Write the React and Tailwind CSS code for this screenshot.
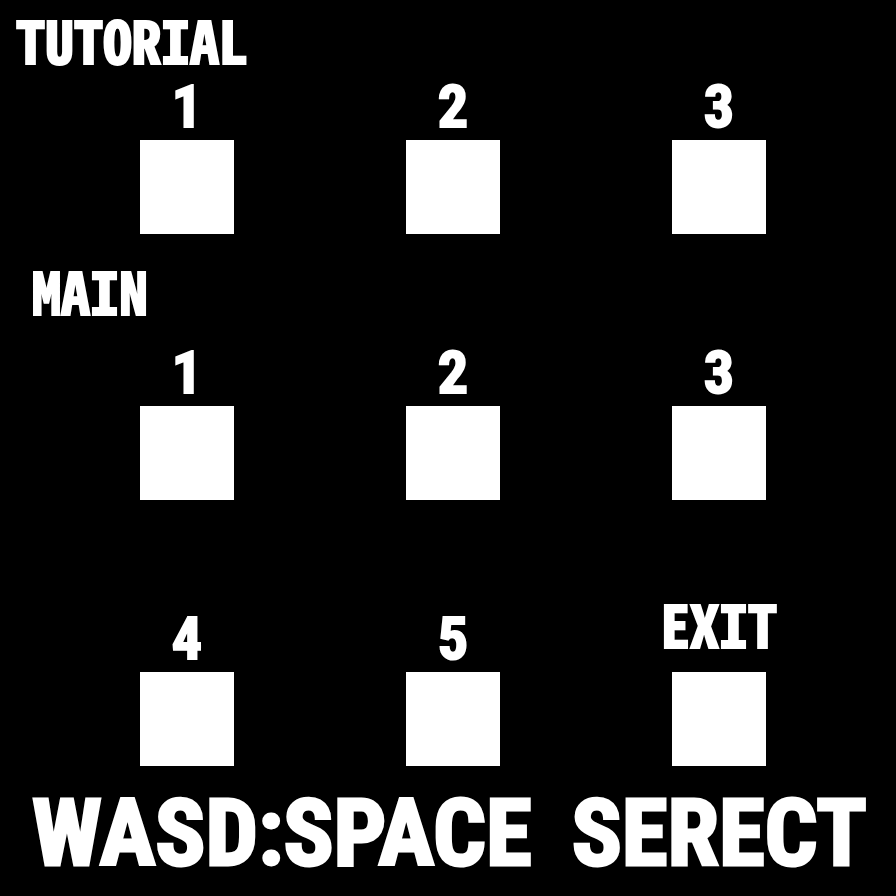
const titleText =
  "font-['Noto_Sans_Mono_CJK_JP','Noto_Sans_CJK_JP',monospace] text-[58px] leading-[60px]";
const numberText = "font-['Roboto_Condensed',Roboto,sans-serif] text-[60px] leading-[60px]";

function Stage({ id, label, labelClass = `${numberText} mb-[3px]` }) {
  return (
    <div className="flex flex-col items-center">
      <label htmlFor={id} className={labelClass}>
        {label}
      </label>
      <button id={id} type="button" className="block size-[94px] cursor-pointer bg-white" />
    </div>
  );
}

function StageGrid({ children, className }) {
  return (
    <div className={`grid grid-cols-3 items-end gap-y-[93px] pr-11 pl-[54px] ${className}`}>
      {children}
    </div>
  );
}

export default function App() {
  return (
    <main className="min-h-screen bg-black pt-[9px] font-bold text-white [-webkit-text-stroke:2px_white]">
      <section>
        <h2 className={`pl-4 ${titleText}`}>TUTORIAL</h2>
        <StageGrid className="pt-2">
          <Stage id="tutorial-1" label="1" />
          <Stage id="tutorial-2" label="2" />
          <Stage id="tutorial-3" label="3" />
        </StageGrid>
      </section>
      <section className="pt-[26px]">
        <h2 className={`pl-8 ${titleText}`}>MAIN</h2>
        <StageGrid className="pt-[23px]">
          <Stage id="main-1" label="1" />
          <Stage id="main-2" label="2" />
          <Stage id="main-3" label="3" />
          <Stage id="main-4" label="4" />
          <Stage id="main-5" label="5" />
          <Stage id="exit" label="EXIT" labelClass={`${titleText} mb-[19px]`} />
        </StageGrid>
      </section>
      <p className="flex gap-10 pt-5 pl-8 font-['Roboto_Condensed',Roboto,sans-serif] text-[93px] leading-[96px] whitespace-nowrap [-webkit-text-stroke:3px_white]">
        <span>WASD:SPACE</span> <span>SERECT</span>
      </p>
    </main>
  );
}
